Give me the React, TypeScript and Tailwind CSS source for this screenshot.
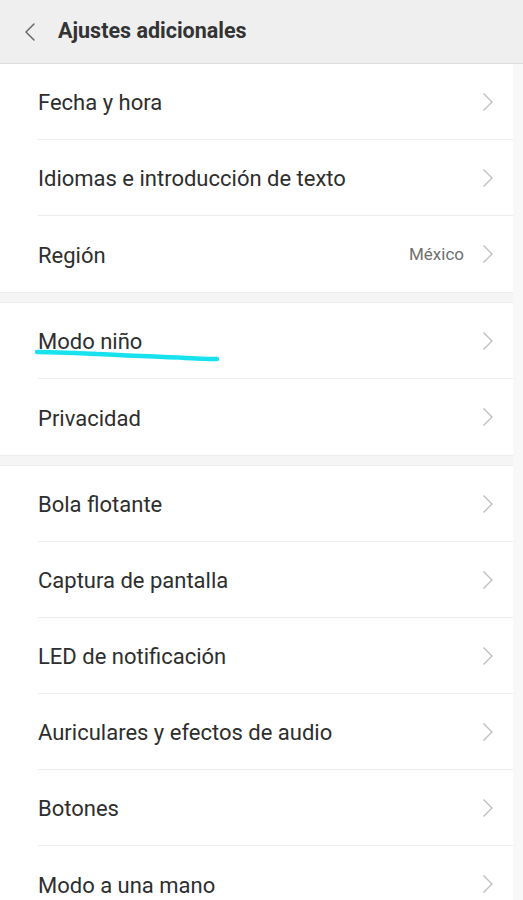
import { ChevronLeft } from 'lucide-react'

type Row = { label: string; value?: string; mark?: boolean }

const SECTIONS: Row[][] = [
  [
    { label: 'Fecha y hora' },
    { label: 'Idiomas e introducción de texto' },
    { label: 'Región', value: 'México' },
  ],
  [{ label: 'Modo niño', mark: true }, { label: 'Privacidad' }],
  [
    { label: 'Bola flotante' },
    { label: 'Captura de pantalla' },
    { label: 'LED de notificación' },
    { label: 'Auriculares y efectos de audio' },
    { label: 'Botones' },
    { label: 'Modo a una mano' },
  ],
]

function SettingsRow({ row, last }: { row: Row; last: boolean }) {
  return (
    <div className="relative pl-[38px]">
      <div
        className={`h-[76px] flex items-center pr-[19px] ${
          last ? '' : 'border-b border-[#ececec]'
        }`}
      >
        <span className="flex-1 text-[22px] text-[#2e2e2e] pt-[2px]">{row.label}</span>
        {row.value && (
          <span className="text-[17px] text-[#707070] mr-[18px] pt-[2px]">{row.value}</span>
        )}
        <svg width="12" height="20" viewBox="0 0 12 20" className="text-[#bdbdbd]">
          <path d="M1.5 1.5 L10 10 L1.5 18.5" fill="none" stroke="currentColor" strokeWidth="1.3" />
        </svg>
      </div>
      {row.mark && (
        <svg
          width="190"
          height="20"
          viewBox="0 0 190 20"
          className="absolute left-[34px] top-[44px] pointer-events-none"
        >
          <path
            d="M3 5 C 40 5, 90 9, 130 10 C 155 11, 175 12, 183 12"
            fill="none"
            stroke="#18e2ee"
            strokeWidth="4.5"
            strokeLinecap="round"
          />
        </svg>
      )}
    </div>
  )
}

export default function App() {
  return (
    <div className="w-[523px] h-[900px] overflow-hidden bg-white font-['Roboto','Noto_Sans',sans-serif]">
      <header className="h-[64px] bg-[#efefef] border-b border-[#dcdcdc] flex items-center">
        <ChevronLeft className="w-[32px] h-[32px] ml-[14px] text-[#666]" strokeWidth={1.1} />
        <h1 className="ml-[12px] text-[21.5px] font-bold text-[#333]">Ajustes adicionales</h1>
      </header>
      <div className="flex">
        <div className="flex-1">
          {SECTIONS.map((section, si) => (
            <div key={si}>
              {si > 0 && (
                <div className="h-[11px] bg-[#f5f5f5] border-y border-[#ececec]" />
              )}
              {section.map((row, ri) => (
                <SettingsRow key={row.label} row={row} last={ri === section.length - 1} />
              ))}
            </div>
          ))}
        </div>
        <div className="w-[10px] bg-[#f8f8f8]" />
      </div>
    </div>
  )
}
